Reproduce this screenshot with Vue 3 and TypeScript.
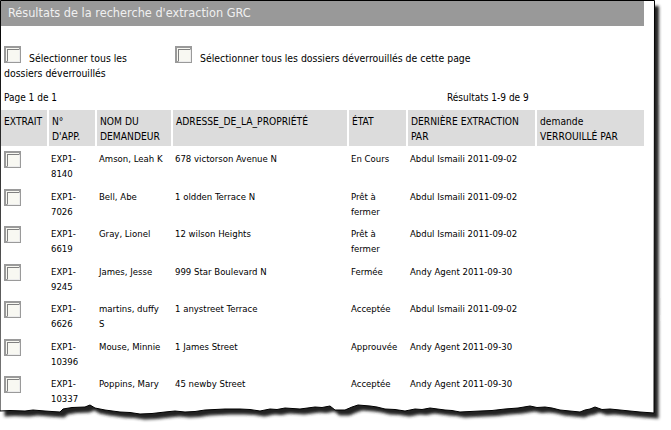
<script setup lang="ts">
interface Row { id: [string, string]; name: string; addr: string; state: string; by: string }
const rows: Row[] = [
  { id: ['EXP1-', '8140'], name: 'Amson, Leah K', addr: '678 victorson Avenue N', state: 'En Cours', by: 'Abdul Ismaili 2011-09-02' },
  { id: ['EXP1-', '7026'], name: 'Bell, Abe', addr: '1 oldden Terrace N', state: 'Prêt à fermer', by: 'Abdul Ismaili 2011-09-02' },
  { id: ['EXP1-', '6619'], name: 'Gray, Lionel', addr: '12 wilson Heights', state: 'Prêt à fermer', by: 'Abdul Ismaili 2011-09-02' },
  { id: ['EXP1-', '9245'], name: 'James, Jesse', addr: '999 Star Boulevard N', state: 'Fermée', by: 'Andy Agent 2011-09-30' },
  { id: ['EXP1-', '6626'], name: 'martins, duffy S', addr: '1 anystreet Terrace', state: 'Acceptée', by: 'Abdul Ismaili 2011-09-02' },
  { id: ['EXP1-', '10396'], name: 'Mouse, Minnie', addr: '1 James Street', state: 'Approuvée', by: 'Andy Agent 2011-09-30' },
  { id: ['EXP1-', '10337'], name: 'Poppins, Mary', addr: '45 newby Street', state: 'Acceptée', by: 'Andy Agent 2011-09-30' },
]
const tear = 'L654 413 L640 412 L625 410.5 L610 409 L602 409.5 L595 407 L590 409 L585 410 L580 412 L570 411 L560 410 L552 408 L545 407 L537 407.5 L530 406 L518 408 L505 409 L492 410.5 L480 411 L460 412 L452 410.5 L445 410 L430 408 L422 409.5 L415 409 L405 411 L395 409.5 L385 409 L377 407 L370 406 L358 405 L352 407 L345 410 L335 410 L330 406 L322 407.5 L315 407 L300 409 L285 408 L277 409.5 L270 409 L260 411 L250 409.5 L240 409 L225 409 L215 409.5 L205 410 L195 411.5 L185 412 L175 411 L165 412 L152 413.5 L140 414 L130 412.5 L120 412 L105 410 L95 408 L90 405 L85 407 L72 407.5 L63 409 L60 412 L52 411.5 L45 411 L33 410 L25 411 L10 410.5 L0 411'
const page = `M0.5 0.5 L654.5 0.5 ${tear} Z`
</script>

<template>
  <div class="shot">
    <svg class="backdrop" width="671" height="430" viewBox="0 0 671 430" aria-hidden="true">
      <defs>
        <filter id="blur" x="-5%" y="-5%" width="110%" height="110%"><feGaussianBlur stdDeviation="1.6" /></filter>
      </defs>
      <path :d="page" transform="translate(4.5 5.5)" fill="#222" filter="url(#blur)" />
      <path :d="page" fill="#fff" stroke="#000" stroke-width="1" />
    </svg>
    <div class="sheet">
      <h1 class="title">Résultats de la recherche d'extraction GRC</h1>
      <div class="select">
        <div class="select-a"><span class="box"></span><span class="sel-label">Sélectionner tous les</span><br />dossiers déverrouillés</div>
        <div class="select-b"><span class="box"></span><span class="sel-label">Sélectionner tous les dossiers déverrouillés de cette page</span></div>
      </div>
      <div class="paging"><span class="page-no">Page 1 de 1</span><span class="count">Résultats 1-9 de 9</span></div>
      <table class="grid">
        <colgroup>
          <col style="width:47px" /><col style="width:48px" /><col style="width:76px" /><col style="width:176px" /><col style="width:59px" /><col style="width:129px" /><col style="width:108px" />
        </colgroup>
        <thead>
          <tr>
            <th>EXTRAIT</th><th>N°<br />D'APP.</th><th>NOM DU DEMANDEUR</th><th>ADRESSE_DE_LA_PROPRIÉTÉ</th><th>ÉTAT</th><th>DERNIÈRE EXTRACTION PAR</th><th>demande VERROUILLÉ PAR</th>
          </tr>
        </thead>
        <tbody>
          <tr v-for="r in rows" :key="r.id[1]">
            <td><span class="box small"></span></td>
            <td>{{ r.id[0] }}<br />{{ r.id[1] }}</td>
            <td class="name">{{ r.name }}</td>
            <td>{{ r.addr }}</td>
            <td>{{ r.state }}</td>
            <td>{{ r.by }}</td>
            <td></td>
          </tr>
        </tbody>
      </table>
    </div>
  </div>
</template>

<style>
html, body { margin: 0; background: #fff; }
</style>

<style scoped>
.shot { position: relative; width: 671px; height: 430px; overflow: hidden; background: #fff; font-family: "DejaVu Sans Condensed", "DejaVu Sans", sans-serif; font-size: 9.5px; color: #000; }
.backdrop { position: absolute; left: 0; top: 0; }
.sheet { position: relative; width: 643px; margin-left: 1px; padding-top: 1px; }
.title { margin: 0; height: 25px; line-height: 24px; padding-left: 7px; background: #999; color: #f0f0f0; font-size: 12.6px; font-weight: 400; }
.select { display: flex; padding: 20px 0 0 3px; line-height: 15px; height: 42px; font-size: 10.4px; }
.select-a { width: 171px; }
.select-b { flex: 1; }
.box { display: inline-block; width: 17px; height: 17px; border: 2px solid #9a9a9a; background: #f8f8f2; box-sizing: border-box; vertical-align: -1px; position: relative; }
.box::after { content: ""; position: absolute; left: 1px; top: 1px; width: 11px; height: 11px; border: 1px solid #808080; border-right-color: #ececec; border-bottom-color: #ececec; box-sizing: content-box; }
.sel-label { margin-left: 8px; }
.paging { display: flex; height: 22px; padding: 2px 0 0 3px; line-height: 15px; box-sizing: border-box; font-size: 10px; }
.page-no { width: 443px; }
.grid { width: 643px; table-layout: fixed; border-collapse: collapse; }
th, td { text-align: left; vertical-align: top; padding: 2px 2px 0 3px; line-height: 15px; font-weight: 400; box-sizing: border-box; }
th { background: #dcdcdc; border-right: 2px solid #fff; height: 36px; padding-top: 4px; font-size: 10.2px; }
th:last-child { border-right: 0; }
td { height: 37.5px; padding-top: 5px; overflow: hidden; }
td:first-child { padding-left: 3px; padding-top: 5px; }
td.name { padding-right: 9px; }
.small { display: block; }
</style>
